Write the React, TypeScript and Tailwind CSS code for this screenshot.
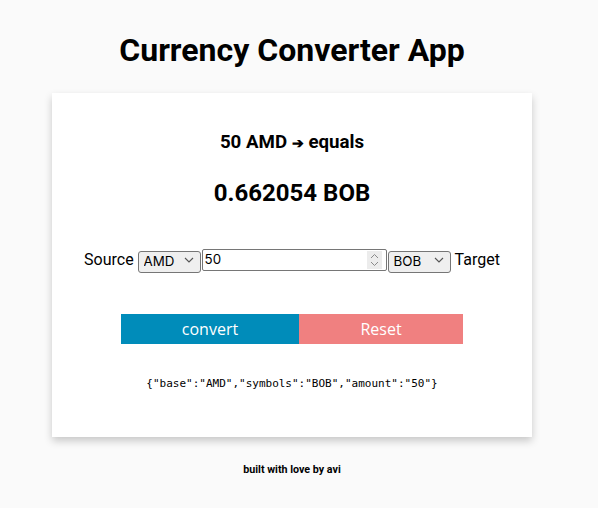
import React from "react";

function Chevron() {
  return (
    <svg width="10" height="6" viewBox="0 0 10 6" className="absolute right-[7px] top-[8px] pointer-events-none">
      <path d="M1 1 L5 5 L9 1" fill="none" stroke="#555" strokeWidth="1.1" />
    </svg>
  );
}

function Sel({ value, w }: { value: string; w: string }) {
  return (
    <div className={`relative ${w} h-[22px] shrink-0`}>
      <select
        defaultValue={value}
        className="appearance-none w-full h-full rounded-[3px] border border-[#767676] bg-[#efefef] pl-[5px] text-[13.33px] text-black font-['Inter',sans-serif] outline-none"
      >
        <option>{value}</option>
      </select>
      <Chevron />
    </div>
  );
}

export default function App() {
  return (
    <div className="min-h-[508px] bg-[#fafafa] font-['Roboto',sans-serif] text-black">
      <div className="w-[584px] flex flex-col items-center pt-[31px]">
        <h1 className="text-[32px] leading-[38px] font-bold">Currency Converter App</h1>
        <div className="mt-[24px] w-[480px] h-[344px] bg-white shadow-[0_4px_8px_rgba(0,0,0,0.2)] flex flex-col items-center pt-[38px]">
          <h3 className="text-[18.72px] leading-[22px] font-bold">
            50 AMD <span className="font-['Noto_Sans',sans-serif] text-[14px]">➔</span> equals
          </h3>
          <h2 className="mt-[25px] text-[24px] leading-[28px] font-bold">0.662054 BOB</h2>
          <div className="mt-[42px] flex items-center h-[22px] text-[16px]">
            <span className="mr-[4px]">Source</span>
            <Sel value="AMD" w="w-[63px]" />
            <div className="ml-[1px] w-[185px] h-[22px] border border-[#767676] rounded-[2px] flex items-center pl-[2px] pr-[4px]">
              <input
                defaultValue="50"
                className="flex-1 min-w-0 outline-none text-[13.33px] font-['Inter',sans-serif] text-black bg-transparent"
              />
              <div className="w-[15px] h-[18px] bg-[#ececec] flex flex-col items-center justify-center">
                <svg width="9" height="14" viewBox="0 0 9 14">
                  <path d="M1 5 L4.5 1.5 L8 5" fill="none" stroke="#8a8a8a" strokeWidth="1" />
                  <path d="M1 9 L4.5 12.5 L8 9" fill="none" stroke="#8a8a8a" strokeWidth="1" />
                </svg>
              </div>
            </div>
            <div className="ml-[1px]">
              <Sel value="BOB" w="w-[63px]" />
            </div>
            <span className="ml-[4px]">Target</span>
          </div>
          <div className="mt-[43px] flex h-[30px]">
            <button className="w-[178px] h-full bg-[#008cba] text-white text-[16px] font-['Open_Sans',sans-serif]">convert</button>
            <button className="w-[164px] h-full bg-[#f08080] text-white text-[16px] font-['Open_Sans',sans-serif]">Reset</button>
          </div>
          <div className="mt-[32px] text-[11px] leading-[16px] font-['DejaVu_Sans_Mono',monospace]">
            {'{"base":"AMD","symbols":"BOB","amount":"50"}'}
          </div>
        </div>
        <div className="mt-[26px] text-[10.72px] leading-[14px] font-bold">built with love by avi</div>
      </div>
    </div>
  );
}
